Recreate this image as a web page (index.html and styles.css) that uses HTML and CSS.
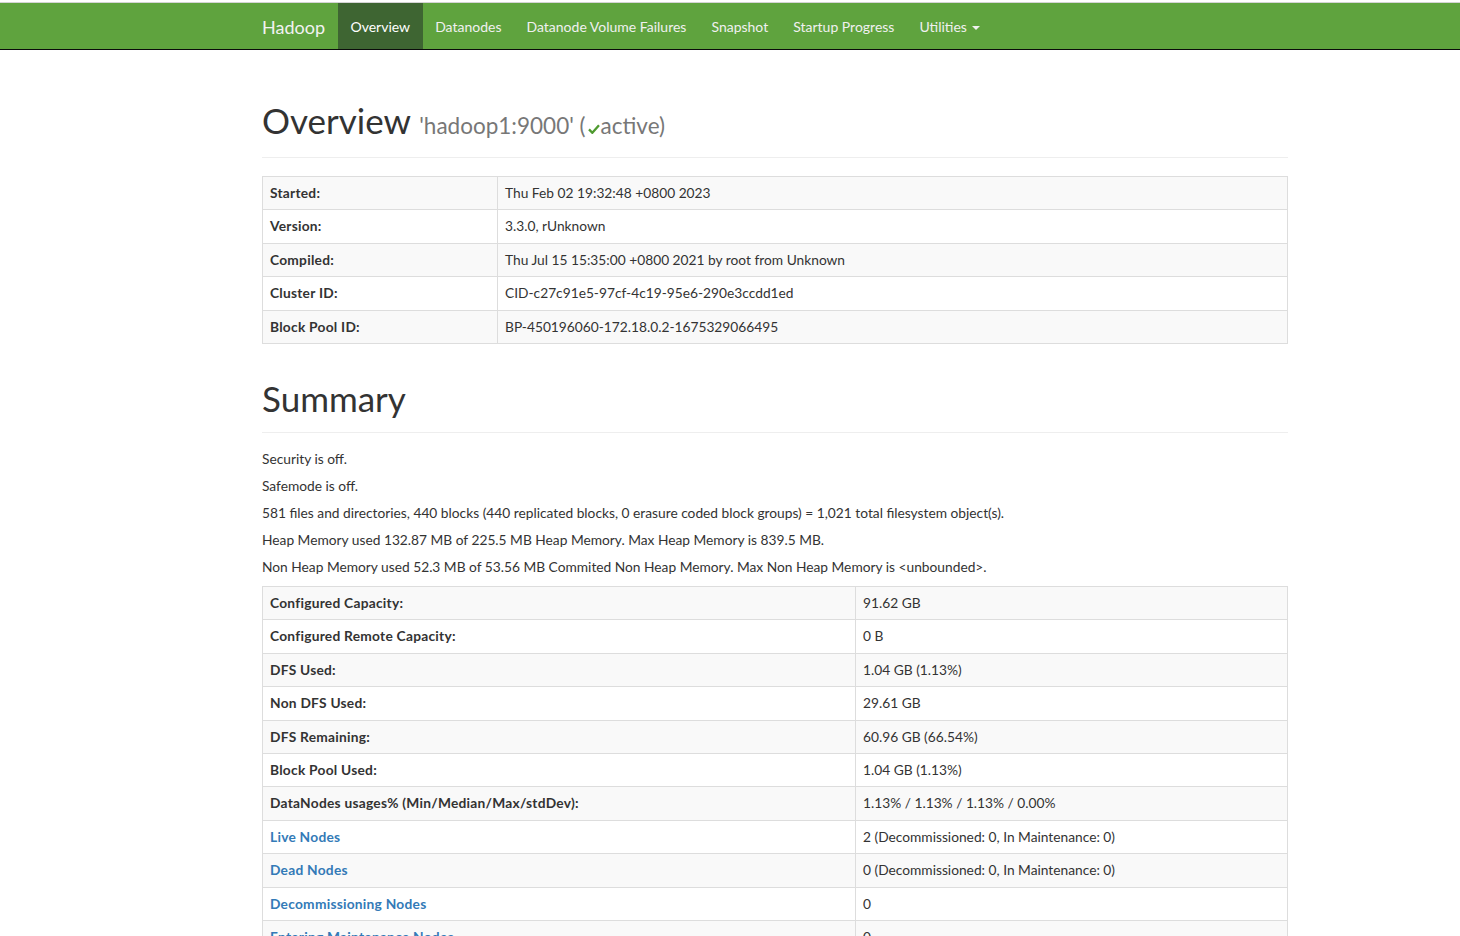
FILE: index.html
```html
<!DOCTYPE html>
<html>
<head>
<meta charset="utf-8">
<title>Namenode information</title>
<link rel="stylesheet" href="styles.css">
</head>
<body>
<nav class="navbar">
  <div class="container nav-inner">
    <a class="brand" href="#">Hadoop</a>
    <ul class="nav">
      <li class="active"><a href="#">Overview</a></li>
      <li><a href="#">Datanodes</a></li>
      <li><a href="#">Datanode Volume Failures</a></li>
      <li><a href="#">Snapshot</a></li>
      <li><a href="#">Startup Progress</a></li>
      <li><a href="#">Utilities <span class="caret"></span></a></li>
    </ul>
  </div>
</nav>

<div class="container">
  <div class="page-header first">
    <h1>Overview <small>'hadoop1:9000' (<svg class="ok" viewBox="0 0 14 12" width="12" height="10"><path d="M1 6.5 L5 10.5 L13 1.5" fill="none" stroke="#4e9a2f" stroke-width="2.8"/></svg>active)</small></h1>
  </div>

  <table class="table info">
    <tbody>
      <tr><th>Started:</th><td>Thu Feb 02 19:32:48 +0800 2023</td></tr>
      <tr><th>Version:</th><td>3.3.0, rUnknown</td></tr>
      <tr><th>Compiled:</th><td>Thu Jul 15 15:35:00 +0800 2021 by root from Unknown</td></tr>
      <tr><th>Cluster ID:</th><td>CID-c27c91e5-97cf-4c19-95e6-290e3ccdd1ed</td></tr>
      <tr><th>Block Pool ID:</th><td>BP-450196060-172.18.0.2-1675329066495</td></tr>
    </tbody>
  </table>

  <div class="page-header second">
    <h1>Summary</h1>
  </div>

  <p>Security is off.</p>
  <p>Safemode is off.</p>
  <p>581 files and directories, 440 blocks (440 replicated blocks, 0 erasure coded block groups) = 1,021 total filesystem object(s).</p>
  <p>Heap Memory used 132.87 MB of 225.5 MB Heap Memory. Max Heap Memory is 839.5 MB.</p>
  <p>Non Heap Memory used 52.3 MB of 53.56 MB Commited Non Heap Memory. Max Non Heap Memory is &lt;unbounded&gt;.</p>

  <table class="table summary">
    <tbody>
      <tr><th>Configured Capacity:</th><td>91.62 GB</td></tr>
      <tr><th>Configured Remote Capacity:</th><td>0 B</td></tr>
      <tr><th>DFS Used:</th><td>1.04 GB (1.13%)</td></tr>
      <tr><th>Non DFS Used:</th><td>29.61 GB</td></tr>
      <tr><th>DFS Remaining:</th><td>60.96 GB (66.54%)</td></tr>
      <tr><th>Block Pool Used:</th><td>1.04 GB (1.13%)</td></tr>
      <tr><th>DataNodes usages% (Min/Median/Max/stdDev):</th><td>1.13% / 1.13% / 1.13% / 0.00%</td></tr>
      <tr><th><a href="#">Live Nodes</a></th><td>2 (Decommissioned: 0, In Maintenance: 0)</td></tr>
      <tr><th><a href="#">Dead Nodes</a></th><td>0 (Decommissioned: 0, In Maintenance: 0)</td></tr>
      <tr><th><a href="#">Decommissioning Nodes</a></th><td>0</td></tr>
      <tr><th><a href="#">Entering Maintenance Nodes</a></th><td>0</td></tr>
      <tr><th><a href="#">Total Datanode Volume Failures</a></th><td>0 (0 B)</td></tr>
      <tr><th>Number of Under-Replicated Blocks</th><td>0</td></tr>
    </tbody>
  </table>
</div>
</body>
</html>
```

FILE: styles.css
```css
html, body {
  margin: 0;
  padding: 0;
  background: #fff;
}
body {
  font-family: Lato, "Noto Sans CJK SC", sans-serif;
  font-size: 13.75px;
  line-height: 20px;
  color: #333;
  padding-top: 2px;
}
a { color: #337ab7; text-decoration: none; }

.container {
  width: 1026px;
  margin-left: 262px;
}

.navbar {
  background: #5fa33e;
  border-top: 1px solid #d4d4d4;
  border-bottom: 1px solid #0b0b0b;
  height: 46px;
}
.nav-inner {
  display: flex;
  align-items: stretch;
  height: 46px;
}
.brand {
  color: #f2f2f2;
  font-size: 18px;
  line-height: 44px;
  padding: 2px 13px 0 0;
}
.nav {
  list-style: none;
  margin: 0;
  padding: 0;
  display: flex;
  font-size: 14px;
}
.nav li a {
  display: block;
  color: #f0f0f0;
  line-height: 44px;
  height: 44px;
  padding: 2px 12.5px 0;
}
.nav li.active a {
  background: #3e6532;
  color: #fff;
}
.caret {
  display: inline-block;
  width: 0;
  height: 0;
  margin-left: 1px;
  vertical-align: middle;
  border-top: 4px solid #f0f0f0;
  border-left: 4px solid transparent;
  border-right: 4px solid transparent;
}

.page-header {
  padding-bottom: 9px;
  border-bottom: 1px solid #eee;
}
.page-header.first { margin: 50px 0 18px; }
.page-header.second { margin: 34px 0 16px; }
.page-header h1 {
  margin: 0 0 8px;
  font-size: 35px;
  line-height: 40px;
  font-weight: 400;
  color: #333;
}
.page-header.second h1 { margin-bottom: 5px; }
.page-header h1 small {
  font-size: 22.5px;
  line-height: 0;
  color: #777;
  font-weight: 400;
}
.ok { vertical-align: 0; margin: 0 1px 0 2px; }

p { margin: 0 0 7px; }

.table {
  width: 100%;
  border-collapse: collapse;
  border: 1px solid #ddd;
  margin: 0;
}
.table.summary { margin-top: 9px; }
.table th, .table td {
  border: 1px solid #ddd;
  padding: 6px 7px;
  line-height: 20.4px;
  text-align: left;
  vertical-align: top;
}
.table th { font-weight: 700; letter-spacing: 0.25px; }
.table tr:nth-child(odd) { background: #f9f9f9; }
.info th { width: 220px; }
.summary th { width: 578px; }
```
